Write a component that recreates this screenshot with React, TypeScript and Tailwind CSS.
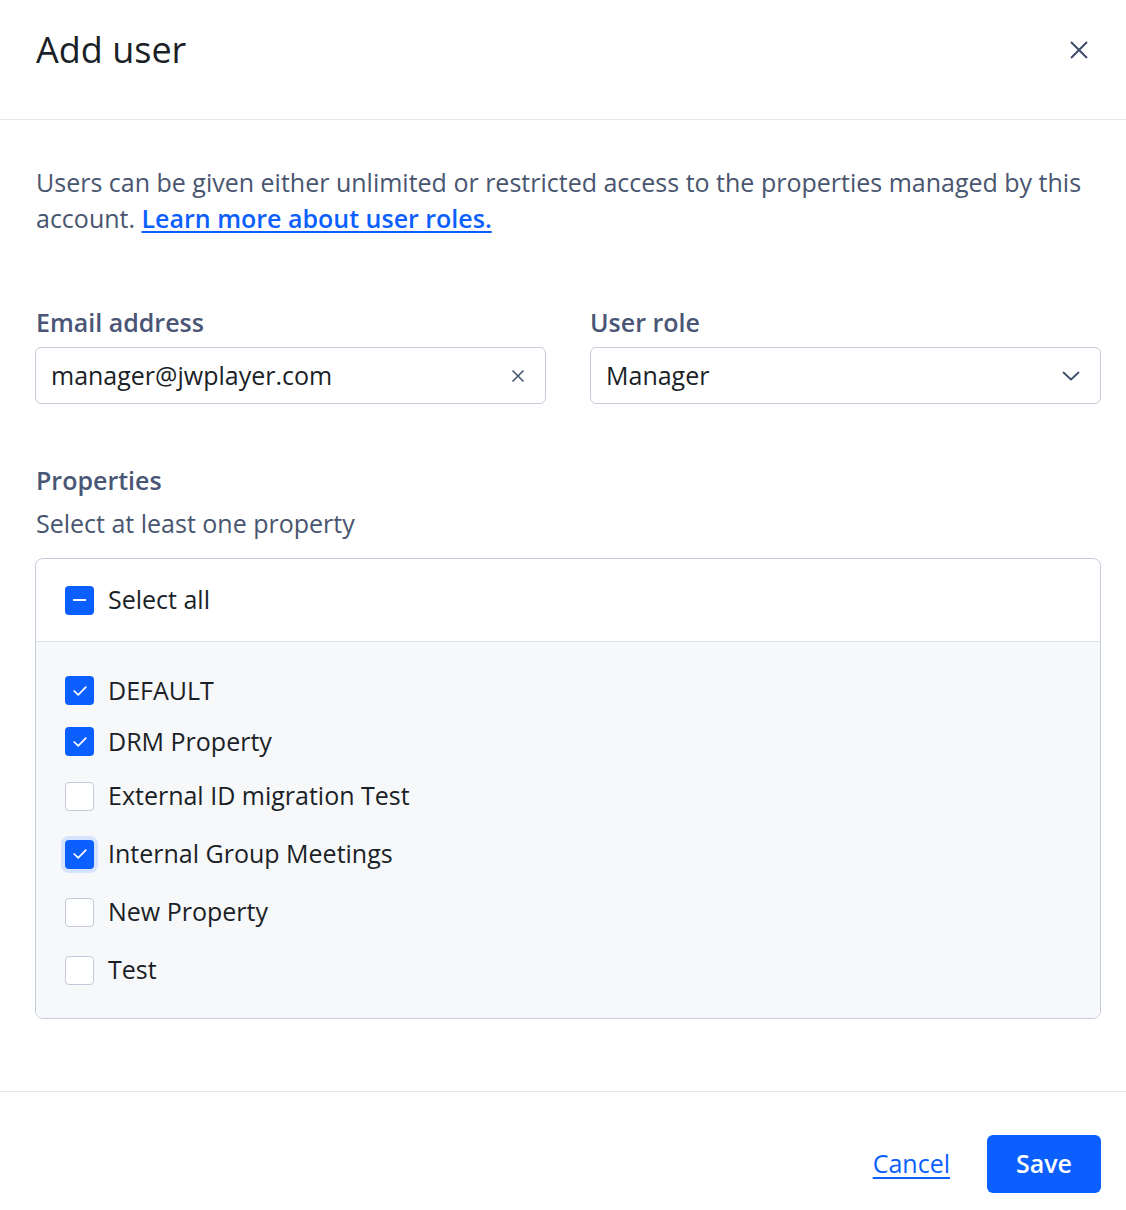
import React from 'react';

const font = { fontFamily: '"Open Sans", "Noto Sans", sans-serif' };

const items = [
    { name: 'DEFAULT', checked: true, h: 'h-[51px]' },
    { name: 'DRM Property', checked: true, h: 'h-[51px]' },
    { name: 'External ID migration Test', checked: false, h: 'h-[58px]' },
    { name: 'Internal Group Meetings', checked: true, focus: true, h: 'h-[58px]' },
    { name: 'New Property', checked: false, h: 'h-[58px]' },
    { name: 'Test', checked: false, h: 'h-[58px]' },
];

const Check = ({ checked, focus }: { checked: boolean; focus?: boolean }) => (
    <span className={`flex items-center justify-center w-[29px] h-[29px] rounded-[4px] shrink-0 ${checked ? 'bg-[#0b5fff]' : 'bg-white border border-[#c3cad9]'} ${focus ? 'ring-4 ring-[#d6e3ff]' : ''}`}>
        {checked && (
            <svg width="14" height="10" viewBox="0 0 14 10" fill="none">
                <path d="M1.2 5l4 3.8L12.8 1.2" stroke="white" strokeWidth="1.7" strokeLinecap="round" strokeLinejoin="round" />
            </svg>
        )}
    </span>
);

export default function App() {
    return (
        <div className="w-[1126px] h-[1210px] bg-white flex flex-col" style={font}>
            <div className="h-[120px] border-b border-[#e3e6ec] flex items-center justify-between pl-[36px] pr-[36px] pb-[20px]">
                <h1 className="text-[36px] text-[#1b1f27] leading-none">Add user</h1>
                <svg width="20" height="20" viewBox="0 0 20 20" fill="none" className="mr-[1px]">
                    <path d="M2 2l16 16M18 2L2 18" stroke="#3f4d6b" strokeWidth="2" />
                </svg>
            </div>

            <div className="flex-1 pl-[35px] pr-[25px] pt-[44px]">
                <p className="pl-[1px] text-[25px] leading-[36px] text-[#48556f]">
                    Users can be given either unlimited or restricted access to the properties managed by this account.{' '}
                    <a className="text-[#0b5fff] font-semibold underline underline-offset-[3px]">Learn more about user roles.</a>
                </p>

                <div className="grid grid-cols-2 gap-[44px] mt-[68px]">
                    <div>
                        <div className="pl-[1px] text-[25px] font-semibold text-[#4a5676] leading-[36px]">Email address</div>
                        <div className="mt-[7px] h-[57px] border border-[#c6ccd8] rounded-[6px] flex items-center justify-between pl-[15px] pr-[20px]">
                            <span className="text-[25px] text-[#1b1f27]">manager@jwplayer.com</span>
                            <svg width="14" height="14" viewBox="0 0 14 14" fill="none">
                                <path d="M1.5 1.5l11 11M12.5 1.5l-11 11" stroke="#48556f" strokeWidth="1.6" />
                            </svg>
                        </div>
                    </div>
                    <div>
                        <div className="text-[25px] font-semibold text-[#4a5676] leading-[36px]">User role</div>
                        <div className="mt-[7px] h-[57px] border border-[#c6ccd8] rounded-[6px] flex items-center justify-between pl-[15px] pr-[20px]">
                            <span className="text-[25px] text-[#1b1f27]">Manager</span>
                            <svg width="18" height="10" viewBox="0 0 18 10" fill="none">
                                <path d="M1.5 1.5l7.5 7 7.5-7" stroke="#3f4d6b" strokeWidth="1.8" strokeLinecap="round" strokeLinejoin="round" />
                            </svg>
                        </div>
                    </div>
                </div>

                <div className="pl-[1px] mt-[58px] text-[25px] font-semibold text-[#4a5676] leading-[36px]">Properties</div>
                <div className="pl-[1px] mt-[7px] text-[25px] text-[#48556f] leading-[36px]">Select at least one property</div>

                <div className="mt-[17px] border border-[#c6ccd8] rounded-[8px] overflow-hidden">
                    <div className="h-[83px] flex items-center gap-[14px] pl-[29px] border-b border-[#dfe3ea]">
                        <span className="flex items-center justify-center w-[29px] h-[29px] rounded-[4px] bg-[#0b5fff]">
                            <span className="w-[13px] h-[2px] bg-white" />
                        </span>
                        <span className="text-[25px] text-[#1b1f27]">Select all</span>
                    </div>
                    <div className="bg-[#f7f8fa] pt-[23px] pb-[19px]">
                        {items.map((it) => (
                            <div key={it.name} className={`${it.h} flex items-center gap-[14px] pl-[29px]`}>
                                <Check checked={it.checked} focus={it.focus} />
                                <span className="text-[25px] text-[#1b1f27]">{it.name}</span>
                            </div>
                        ))}
                    </div>
                </div>
            </div>

            <div className="h-[119px] border-t border-[#e3e6ec] flex items-center justify-end gap-[37px] pr-[25px] pt-[26px]">
                <a className="text-[25px] text-[#0b5fff] underline underline-offset-[4px]">Cancel</a>
                <button className="h-[58px] w-[114px] rounded-[6px] bg-[#0b5fff] text-white text-[25px] font-semibold">Save</button>
            </div>
        </div>
    );
}
